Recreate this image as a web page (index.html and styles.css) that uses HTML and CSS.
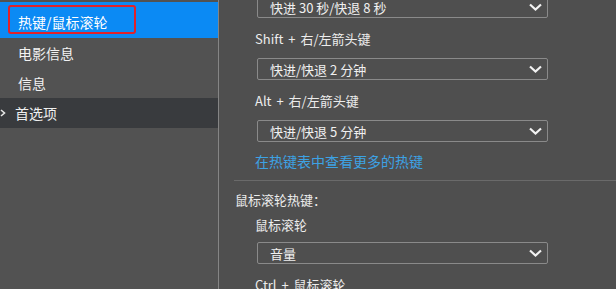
FILE: index.html
```html
<!DOCTYPE html>
<html lang="zh-CN">

<head>
  <meta charset="utf-8">
  <meta name="viewport" content="width=device-width, initial-scale=1.0">
  <title>首选项 - 热键/鼠标滚轮</title>
  <link rel="stylesheet" href="styles.css">
</head>

<body>
  <div class="window">
    <ul class="side-nav">
      <li class="nav-item active">
        热键/鼠标滚轮
        <span class="mark"></span>
      </li>
      <li class="nav-item">电影信息</li>
      <li class="nav-item">信息</li>
      <li class="nav-group">
        <svg class="caret" width="6" height="8" viewBox="0 0 6 8">
          <path d="M1 1 L4.5 4 L1 7" fill="none" stroke="#e6e6e6" stroke-width="1.6"/>
        </svg>
        首选项
      </li>
    </ul>

    <div class="content">
      <div class="select first">
        <span>快进 30 秒/快退 8 秒</span>
        <svg class="chev" width="13" height="8" viewBox="0 0 13 8">
          <path d="M1 1.5 L6.5 6.5 L12 1.5" fill="none" stroke="#f2f2f2" stroke-width="2.2"/>
        </svg>
      </div>

      <div class="label">Shift + 右/左箭头键</div>
      <div class="select">
        <span>快进/快退 2 分钟</span>
        <svg class="chev" width="13" height="8" viewBox="0 0 13 8">
          <path d="M1 1.5 L6.5 6.5 L12 1.5" fill="none" stroke="#f2f2f2" stroke-width="2.2"/>
        </svg>
      </div>

      <div class="label">Alt + 右/左箭头键</div>
      <div class="select">
        <span>快进/快退 5 分钟</span>
        <svg class="chev" width="13" height="8" viewBox="0 0 13 8">
          <path d="M1 1.5 L6.5 6.5 L12 1.5" fill="none" stroke="#f2f2f2" stroke-width="2.2"/>
        </svg>
      </div>

      <a class="more-link" href="#">在热键表中查看更多的热键</a>

      <hr class="divider">

      <div class="section-title">鼠标滚轮热键：</div>
      <div class="label wheel">鼠标滚轮</div>
      <div class="select">
        <span>音量</span>
        <svg class="chev" width="13" height="8" viewBox="0 0 13 8">
          <path d="M1 1.5 L6.5 6.5 L12 1.5" fill="none" stroke="#f2f2f2" stroke-width="2.2"/>
        </svg>
      </div>

      <div class="label">Ctrl + 鼠标滚轮</div>
    </div>
  </div>
</body>

</html>
```

FILE: styles.css
```css
* {
  box-sizing: border-box;
}

body {
  margin: 0;
  background: #4f4f4f;
  color: #ececec;
  font-family: "Noto Sans CJK SC", "Noto Sans", sans-serif;
}

.window {
  display: flex;
  height: 289px;
  overflow: hidden;
}

/* left menu */
.side-nav {
  width: 219px;
  flex: none;
  margin: 0;
  padding: 2px 0 0 0;
  list-style: none;
  background: #525252;
  border-right: 1px solid #858585;
}

.nav-item {
  position: relative;
  padding-left: 18px;
  font-size: 14px;
  line-height: 30px;
  color: #f2f2f2;
}

.nav-item.active {
  padding-top: 5px;
  padding-bottom: 1px;
  background: #0b8af4;
  color: #fff;
}

.nav-item .mark {
  position: absolute;
  left: 8px;
  top: 3px;
  width: 128px;
  height: 29px;
  border: 2px solid #e0222a;
  border-radius: 3px;
}

.nav-group {
  display: flex;
  align-items: center;
  gap: 9px;
  height: 30px;
  font-size: 14px;
  color: #f0f0f0;
  background: #393b3e;
}

/* right panel */
.content {
  flex: 1;
  padding-left: 15px;
  font-size: 13px;
}

.select {
  display: flex;
  align-items: center;
  justify-content: space-between;
  width: 291px;
  height: 22px;
  margin-left: 23px;
  padding: 0 5px 0 12px;
  border: 1px solid #8a8a8a;
  border-radius: 2px;
  color: #f0f0f0;
  font-size: 13px;
}

.select.first {
  margin-top: -4px;
}

.label {
  margin: 11px 0 9px 21px;
  line-height: 20px;
  word-spacing: 2px;
  color: #ececec;
}

.label.wheel {
  margin-top: 5px;
  margin-bottom: 7px;
}

.more-link {
  display: block;
  margin: 9px 0 9px 21px;
  line-height: 20px;
  font-size: 14px;
  color: #3da2e4;
  text-decoration: none;
}

.divider {
  margin: 0;
  border: none;
  border-top: 1px solid #6a6a6a;
}

.section-title {
  margin: 9px 0 0 1px;
  line-height: 20px;
  color: #ececec;
}
```
